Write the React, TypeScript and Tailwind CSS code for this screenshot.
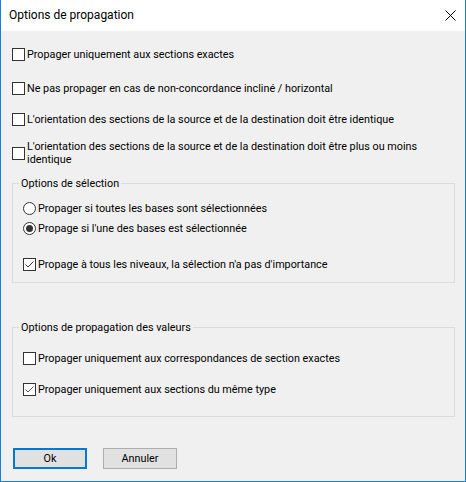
import React from "react";

function CheckBox({ checked = false, tone = "#333333" }: { checked?: boolean; tone?: string }) {
  return (
    <div className="w-[13px] h-[13px] shrink-0 border border-[#333333] bg-white flex items-center justify-center">
      {checked && (
        <svg width="11" height="11" viewBox="0 0 11 11">
          <polyline points="1.5,5.5 4,8 9.5,2.5" fill="none" stroke={tone} strokeWidth="1" />
        </svg>
      )}
    </div>
  );
}

function Radio({ checked = false }: { checked?: boolean }) {
  return (
    <div className="w-[13px] h-[13px] shrink-0 rounded-full border border-[#333333] bg-white flex items-center justify-center">
      {checked && <div className="w-[7px] h-[7px] rounded-full bg-[#333333]" />}
    </div>
  );
}

function Row({ children, control, className = "" }: { children: React.ReactNode; control: React.ReactNode; className?: string }) {
  return (
    <div className={`flex items-center gap-[2px] h-[13px] ${className}`}>
      {control}
      <span className="whitespace-nowrap leading-[15px]">{children}</span>
    </div>
  );
}

function Group({ label, className = "", children }: { label: string; className?: string; children: React.ReactNode }) {
  return (
    <div className={`relative w-[443px] border border-[#dcdcdc] pl-[10px] ${className}`}>
      <span className="absolute left-[6px] top-[-8px] bg-[#f0f0f0] px-[2px] leading-[15px] whitespace-nowrap">{label}</span>
      {children}
    </div>
  );
}

export default function App() {
  return (
    <div className="w-[466px] h-[482px] flex flex-col border-x border-b border-[#1c7fd6] bg-[#f0f0f0] text-[10.8px] text-black font-['Roboto',sans-serif]">
      <div className="h-[31px] shrink-0 bg-white flex items-center justify-between pl-[8px] pr-[9px]">
        <span className="leading-[15px] text-[12px]">Options de propagation</span>
        <svg width="11" height="11" viewBox="0 0 11 11">
          <path d="M0.5 0.5 L10.5 10.5 M10.5 0.5 L0.5 10.5" stroke="#000" strokeWidth="1" />
        </svg>
      </div>
      <div className="flex-1 flex flex-col pl-[11px]">
        <Row className="mt-[17px]" control={<CheckBox />}>Propager uniquement aux sections exactes</Row>
        <Row className="mt-[21px]" control={<CheckBox />}>Ne pas propager en cas de non-concordance incliné / horizontal</Row>
        <Row className="mt-[18px]" control={<CheckBox />}>L'orientation des sections de la source et de la destination doit être identique</Row>
        <div className="mt-[14px] flex items-center gap-[2px] h-[26px]">
          <CheckBox />
          <span className="leading-[13px]">
            L'orientation des sections de la source et de la destination doit être plus ou moins
            <br />
            identique
          </span>
        </div>
        <Group label="Options de sélection" className="mt-[17px] h-[100px]">
          <Row className="mt-[18px]" control={<Radio />}>Propager si toutes les bases sont sélectionnées</Row>
          <Row className="mt-[7px]" control={<Radio checked />}>Propage si l'une des bases est sélectionnée</Row>
          <Row className="mt-[23px]" control={<CheckBox checked />}>Propage à tous les niveaux, la sélection n'a pas d'importance</Row>
        </Group>
        <Group label="Options de propagation des valeurs" className="mt-[44px] h-[90px]">
          <Row className="mt-[24px]" control={<CheckBox />}>Propager uniquement aux correspondances de section exactes</Row>
          <Row className="mt-[18px]" control={<CheckBox checked tone="#555555" />}>Propager uniquement aux sections du même type</Row>
        </Group>
        <div className="mt-[31px] flex gap-[16px] pl-[1px]">
          <button className="w-[74px] h-[21px] border-2 border-[#0078d7] bg-[#e1e1e1] leading-[15px]">Ok</button>
          <button className="w-[74px] h-[21px] border border-[#adadad] bg-[#e1e1e1] leading-[15px]">Annuler</button>
        </div>
      </div>
    </div>
  );
}
